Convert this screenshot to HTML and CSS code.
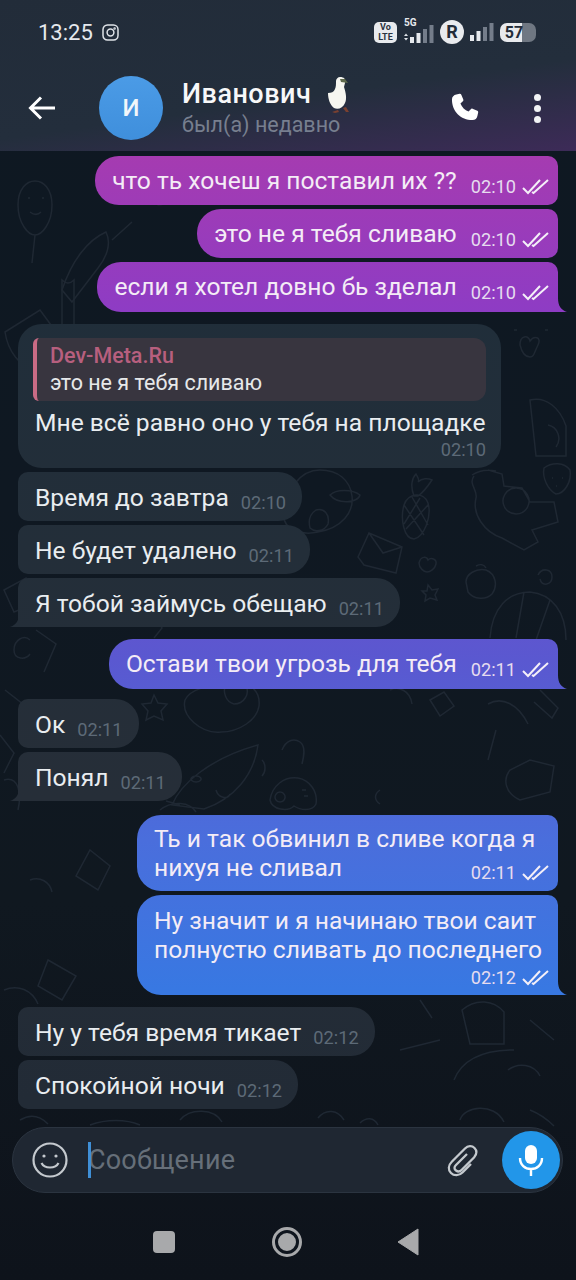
FILE: index.html
```html
<!DOCTYPE html>
<html lang="ru">
<head>
    <meta charset="UTF-8">
    <meta name="viewport" content="width=device-width, initial-scale=1.0">
    <title>Иванович</title>
    <link rel="stylesheet" href="styles.css">
</head>
<body>

<svg width="0" height="0" class="defs">
    <symbol id="checks" viewBox="0 0 27 18">
        <path d="M1 10l5 5L18 2M10 14l1.500 1L26 2" fill="none" stroke="currentColor" stroke-width="2"/>
    </symbol>
</svg>

<div class="phone">
    <header class="top">
        <div class="status">
            <span class="clock">13:25</span>
            <svg class="insta" width="17" height="17" viewBox="0 0 17 17" fill="none" stroke="#dfe3e8" stroke-width="1.500"><rect x="1" y="1" width="15" height="15" rx="4.500"/><circle cx="8.500" cy="8.500" r="3.400"/><circle cx="12.600" cy="4.400" r=".5"/></svg>
            <div class="status-right">
                <span class="volte">Vo<br>LTE</span>
                <span class="net"><b>5G</b>
                    <svg width="31" height="18" viewBox="0 0 31 18"><path d="M1 11l2-2.500 2 2.500zM1 13l2 2.500 2-2.500z" fill="#dfe3e8"/><path d="M7 12h4v6H7zM13.500 8h4v10h-4z" fill="#e6e9ed"/><path d="M20 4h4v14h-4zM26.500 0h4v18h-4z" fill="#747d8a"/></svg>
                </span>
                <span class="r-mark">R</span>
                <svg width="24" height="18" viewBox="0 0 24 18"><path d="M0 12h4v6H0zM6.500 8h4v10h-4z" fill="#e6e9ed"/><path d="M13 4h4v14h-4zM19.500 0h4v18h-4z" fill="#747d8a"/></svg>
                <span class="battery"><span class="level">57</span></span>
            </div>
        </div>
        <div class="toolbar">
            <svg class="back" width="28" height="26" viewBox="0 0 28 26" fill="none" stroke="#fff" stroke-width="3"><path d="M27 13H3M13 2.500L2.500 13 13 23.500"/></svg>
            <div class="avatar">И</div>
            <div class="who">
                <div class="name">Иванович
                    <svg class="goose" width="24" height="38" viewBox="0 0 24 38"><path d="M12 34l-6 2 3 1 4-1zM17 32l3 4h3l-3-5z" fill="#7a4030"/><path d="M14 1c4 0 6 2 5 6l-1 4c2 6 3 12 1 16-2 5-7 7-11 5-4-3-6-9-6-15 3 0 6-1 7-4 1-2 1-5 1-8 0-2 2-4 4-4z" fill="#f6f6f0"/><path d="M14 3h5l3 4-7-1z" fill="#5f6a4c"/></svg>
                </div>
                <div class="seen">был(а) недавно</div>
            </div>
            <svg class="call" width="34" height="34" viewBox="0 0 24 24" fill="#fff"><path d="M6.600 2.500l2.300-.5c.5-.1 1 .2 1.200.6l1.400 3.400c.2.400.1.900-.3 1.200L9.500 8.800c.9 2.500 3.200 4.800 5.700 5.700l1.600-1.700c.3-.4.800-.5 1.200-.3l3.400 1.400c.5.200.7.700.6 1.200l-.5 2.300c-.3 1.800-1.600 3.100-3.500 3.100C9.600 20.500 3.500 14.400 3.500 6c0-1.900 1.300-3.200 3.100-3.500z"/></svg>
            <div class="dots"><i></i><i></i><i></i></div>
        </div>
    </header>

    <main class="chat">
        <svg class="wallpaper" width="576" height="976" viewBox="0 151 576 976" fill="none" stroke="#1f2833" stroke-width="1.500">
            <!-- balloon, sketches on the left -->
            <path d="M18 205c0-32 34-32 34 0 0 18-10 30-17 30s-17-12-17-30zM35 235l-3 28M28 198h2M42 198h2M30 212c4 3 8 3 11 0"/>
            <path d="M62 290c10-30 26-50 44-58 6 12 0 26-8 36l-26 34zM100 290c10-6 24 0 26 14M112 240l20-18"/>
            <path d="M5 332l35-22 22 30-28 30c-14-4-26-18-29-38zM62 280c4 4 8 4 12 0v46c-4 4-8 4-12 0z"/>
            <path d="M150 190c6-8 18-2 16 8s-14 8-14 0M520 345c0-10 8-10 10-4 4-6 12-4 8 4s-4 12-8 12-8-4-10-12zM514 330h3M545 330h3"/>
            <path d="M530 400c16-4 30 8 36 26v30h-30zM548 425c10 2 14 14 8 22M4 590l22-12 8 26-20 8z"/>
            <!-- right column: pineapple, strawberry, cat, envelope -->
            <path d="M404 505c4-12 20-14 24-2 4 14-4 34-14 36-10 0-14-20-10-34zM404 505l20 30M412 497l16 28M428 505l-22 24M420 498l-16 26M414 496c-4-10-2-18 2-22 2 4 4 6 2 8 4-4 10-4 14-2-4 6-8 12-14 16z"/>
            <path d="M544 468c8-6 20-6 26 2 2 12-6 24-14 24-8-4-14-16-12-26zM552 478h1M562 478h1M556 486h1"/>
            <path d="M472 475c6-4 14-6 24-4M474 476c-6 8 4 14 2 22-4 16 8 34 26 40l22 12 14-8-6-12 26-8-4-20-24 0-8-14-18-2-2-12-14-4M516 488a13 13 0 1 0 .1 0"/>
            <path d="M358 557l11-24 33 14-6 26-32-8zM369 533l14 20 19-6M419 563c2-8 8-6 9-3 3-3 9-1 8 4s-6 8-9 8-8-4-8-9zM428 585l4 5 6-1-3 6 2 5-7-2-5 3 1-6-4-4h5z"/>
            <path d="M320 470c-20 0-34 20-36 44-2 14 16 22 34 18 24-4 36-20 34-36-2-16-14-26-32-26zM330 495c6-6 22-6 30 0-2 8-22 10-30 0zM316 510c8-2 14 4 12 14-4 8-14 8-18 4-2-8 0-14 6-18z"/>
            <path d="M466 582c0-8 10-14 20-12 10 4 12 16 6 24-6 6-18 6-24-2zM476 566c4-2 8-2 10 2M538 575c4-8 14-6 14 2s-10 10-12 2M490 638c2-30 18-46 40-46 22 2 36 20 36 48M524 592l-8 46M550 600l-14 40M294 600h16v22h-16z"/>
            <!-- middle: astronaut, star, rocket, controller -->
            <path d="M185 700c6-12 24-14 40-16 18-8 36 4 34 22-2 14-20 26-38 26-20 2-40-16-36-32zM226 684c-4 8 0 18 8 20 10 0 16-10 12-18M154 695l4 8 9 1-6 7 2 9-9-4-8 4 2-9-6-7 9-1z"/>
            <path d="M172 805c8-20 36-46 86-60-4 30-24 54-54 64zM196 776a5 3 0 1 0 .1 0M216 790c2 8 12 10 14 4M180 805l-14-4M262 760c4 4 4 12 0 16"/>
            <path d="M270 800c2-14 14-24 28-22 12 2 20 14 18 26-4 8-16 6-22 2-6 6-22 4-24-6zM280 792a5 5 0 1 0 .1 0M302 790h4M304 796h4M282 750c4-10 12-12 18-8s4 14 2 22"/>
            <path d="M30 640c-6-6-16 0-16 10s12 10 16 4M36 630l20 14-12 28M5 690l28 22-12 18M156 618l6 10-8 10"/>
            <path d="M0 735l14 18-10 20M4 780c14-4 18 12 14 30M50 730c8-6 18-4 24 2M160 810c12-10 30-8 36 2"/>
            <path d="M488 704c14-8 30 0 40 20M496 730l-8 30M540 690l18 18-6 10-18-16M510 770c-8 10-4 24 10 30l30-8 4-26-24-6z"/>
            <path d="M390 690c8-4 20 0 22 14M430 700l14-8 10 14-14 10zM380 790c-6 4-6 10 0 14M30 880c10-4 20 2 22 12M90 850l20 16-12 24-22-14z"/>
            <path d="M4 990c14-6 28 0 34 14M48 960l28 16-14 24-24-14zM462 1010c14-12 32-10 42 2v32h-34zM400 1050l40-10M508 1070c10-8 26-6 32 6M420 1000l12 18M454 1080c8-20 28-30 60-30M530 1020l24 20"/>
            <path d="M90 1125c16-6 36-6 50 0M20 1120c10-6 20-4 28 4M180 1120c10-12 34-12 42 2M318 1118c8-10 20-8 26 2M360 1123c6-6 14-6 18 2M460 1120c4-14 34-18 44 2M530 1110c10 4 18 10 24 16"/>
        </svg>

        <div class="bubble out">
            <span class="text">что ть хочеш я поставил их ??</span>
            <span class="meta">02:10 <svg class="tick"><use href="#checks"/></svg></span>
        </div>
        <div class="bubble out">
            <span class="text">это не я тебя сливаю</span>
            <span class="meta">02:10 <svg class="tick"><use href="#checks"/></svg></span>
        </div>
        <div class="bubble out tail">
            <span class="text">если я хотел довно бь зделал</span>
            <span class="meta">02:10 <svg class="tick"><use href="#checks"/></svg></span>
        </div>

        <div class="bubble in reply-bubble group-start">
            <div class="quote">
                <div class="quote-from">Dev-Meta.Ru</div>
                <div class="quote-text">это не я тебя сливаю</div>
            </div>
            <div class="text">Мне всё равно оно у тебя на площадке</div>
            <div class="meta meta-end">02:10</div>
        </div>
        <div class="bubble in">
            <span class="text">Время до завтра</span>
            <span class="meta">02:10</span>
        </div>
        <div class="bubble in">
            <span class="text">Не будет удалено</span>
            <span class="meta">02:11</span>
        </div>
        <div class="bubble in tail">
            <span class="text">Я тобой займусь обещаю</span>
            <span class="meta">02:11</span>
        </div>

        <div class="bubble out tail group-start">
            <span class="text">Остави твои угрозь для тебя</span>
            <span class="meta">02:11 <svg class="tick"><use href="#checks"/></svg></span>
        </div>

        <div class="bubble in gap-small">
            <span class="text">Ок</span>
            <span class="meta">02:11</span>
        </div>
        <div class="bubble in tail">
            <span class="text">Понял</span>
            <span class="meta">02:11</span>
        </div>

        <div class="bubble out multi gap-large">
            <div class="text">Ть и так обвинил в сливе когда я<br>нихуя не сливал</div>
            <div class="meta meta-over">02:11 <svg class="tick"><use href="#checks"/></svg></div>
        </div>
        <div class="bubble out multi last tail">
            <div class="text">Ну значит и я начинаю твои саит<br>полнустю сливать до последнего</div>
            <div class="meta meta-end">02:12 <svg class="tick"><use href="#checks"/></svg></div>
        </div>

        <div class="bubble in group-start">
            <span class="text">Ну у тебя время тикает</span>
            <span class="meta">02:12</span>
        </div>
        <div class="bubble in">
            <span class="text">Спокойной ночи</span>
            <span class="meta">02:12</span>
        </div>

        <div class="composer">
            <svg class="smile" width="36" height="36" viewBox="0 0 36 36" fill="none" stroke="#c4c9ce" stroke-width="2.200"><circle cx="18" cy="18" r="16.500"/><circle cx="12" cy="14" r="1.600" fill="#c4c9ce" stroke="none"/><circle cx="24" cy="14" r="1.600" fill="#c4c9ce" stroke="none"/><path d="M9.500 21c3 6 14 6 17 0"/></svg>
            <div class="field"><span class="caret"></span>Сообщение</div>
            <svg class="clip" width="34" height="36" viewBox="0 0 34 36" fill="none" stroke="#c4c9ce" stroke-width="2.300"><path d="M20 12L9 23c-2 2-2 4 0 5.500s3.500 1.500 5.500-.5L27 15.500c3-3.500 3-7 .5-9.500s-6.500-2.500-9.500.5L5 19.500c-4 4-4 8.500-1 11.500s8 3 11.500-.5L24 22"/></svg>
            <div class="mic">
                <svg width="30" height="34" viewBox="0 0 30 34" fill="none" stroke="#fff" stroke-width="2.400"><rect x="9" y="2" width="12" height="19" rx="6" fill="#fff" stroke="none"/><path d="M4 15c0 7 5 11 11 11s11-4 11-11M15 26v7"/></svg>
            </div>
        </div>
    </main>

    <nav class="navbar">
        <span class="nav-square"></span>
        <span class="nav-home"></span>
        <svg width="22" height="28" viewBox="0 0 22 28"><path d="M21 1v26L1 14z" fill="#a8a9ab" stroke="#a8a9ab" stroke-linejoin="round"/></svg>
    </nav>
</div>

</body>
</html>
```

FILE: styles.css
```css
html, body { margin: 0; padding: 0; background: #0f1620; }
body { font-family: Roboto, "Liberation Sans", sans-serif; color: #eef0f2; }
.defs { position: absolute; }
.phone { width: 576px; height: 1280px; display: flex; flex-direction: column; overflow: hidden; background: linear-gradient(180deg, #0e1822 0, #0f1822 500px, #101820 900px, #0e131b 1280px); }

/* header */
.top { height: 151px; flex: none; box-sizing: border-box; padding: 20px 0 0; background: linear-gradient(172deg, #222c39 0, #232e3c 60%, #3d2b58 100%); }
.status { display: flex; align-items: center; height: 24px; padding: 0 40px 0 38px; }
.clock { font-size: 22px; color: #e6e9ed; }
.insta { margin-left: 9px; }
.status-right { margin-left: auto; display: flex; align-items: center; gap: 6px; }
.volte { width: 23px; height: 21px; border-radius: 5px; background: #e8eaed; color: #2a3340; font-size: 9px; line-height: 10.5px; font-weight: 700; text-align: center; }
.net { position: relative; display: block; width: 31px; height: 22px; }
.net b { position: absolute; left: 1px; top: -4px; font-size: 10px; color: #e6e9ed; }
.net svg { position: absolute; left: 0; top: 4px; }
.r-mark { width: 24px; height: 24px; border-radius: 50%; background: #e9ebee; color: #232c38; font-size: 18px; font-weight: 700; line-height: 24px; text-align: center; }
.battery { width: 36px; height: 19px; border-radius: 7px; background: linear-gradient(90deg, #e8eaed 62%, #6f7782 62%); display: block; }
.level { display: block; width: 28px; text-align: center; font-size: 16px; line-height: 19px; font-weight: 700; color: #232c38; }
.toolbar { display: flex; align-items: center; height: 72px; margin-top: 28px; padding-left: 28px; }
.back { flex: none; }
.avatar { flex: none; width: 64px; height: 64px; margin-left: 43px; border-radius: 50%; background: linear-gradient(180deg, #4b9be6, #3f8fdc); color: #f2f6fa; font-size: 24px; font-weight: 500; line-height: 64px; text-align: center; }
.who { margin-left: 19px; width: 258px; }
.name { font-size: 27px; line-height: 30px; font-weight: 500; color: #f7f8f9; letter-spacing: .5px; position: relative; height: 30px; }
.goose { position: absolute; left: 144px; top: -3px; }
.seen { font-size: 21.5px; line-height: 26px; color: #777f8f; margin-top: 3px; }
.call { flex: none; margin-left: 7px; }
.dots { flex: none; margin-left: 53px; display: flex; flex-direction: column; gap: 4px; }
.dots i { display: block; width: 7px; height: 7px; border-radius: 50%; background: #f2f3f5; }

/* messages */
.chat { position: relative; flex: 1; display: flex; flex-direction: column; padding: 1px 18px 0; }
.wallpaper { position: absolute; left: 0; top: 0; }
.bubble { position: relative; display: flex; box-sizing: border-box; min-height: 49px; margin-top: 4px; border-radius: 24px; font-size: 24.6px; line-height: 29px; }
.group-start { margin-top: 12px; }
.gap-small { margin-top: 10px; }
.gap-large { margin-top: 14px; }
.text { white-space: nowrap; }
.meta { white-space: nowrap; font-size: 18.2px; line-height: 20px; display: flex; align-items: center; }

.out { align-self: flex-end; padding: 10px 9px 0 17px; background: linear-gradient(180deg, #a63bb0 150px, #8e3cc4 310px, #5a58d0 660px, #4a6edc 840px, #3878e2 990px) fixed; color: #f4ecf6; border-top-right-radius: 10px; border-bottom-right-radius: 10px; }
.out.tail { min-height: 50px; }
.out .meta { margin: 10px 0 0 14px; height: 22px; color: #e6dcef; gap: 6px; }
.tick { width: 27px; height: 18px; color: #f4eff8; }
.in { align-self: flex-start; padding: 11px 16px 0 17px; background: linear-gradient(180deg, #202e3a 300px, #262e38 800px, #222b36 1100px) fixed; color: #e9edf0; border-top-left-radius: 10px; border-bottom-left-radius: 10px; }
.in .meta { margin: 9px 0 0 12px; height: 22px; color: #5d6a77; }

.tail { border-bottom-right-radius: 0; }
.in.tail { border-bottom-right-radius: 24px; border-bottom-left-radius: 0; }
.tail::after { content: ""; position: absolute; bottom: 0; width: 9px; height: 14px; background: inherit; }
.out.tail::after { right: -9px; clip-path: path("M0 0C0 8 3 12 9 14H0Z"); }
.in.tail::after { left: -8px; clip-path: path("M9 0C9 8 6 12 0 14H9Z"); }

.reply-bubble { display: block; width: 483px; height: 144px; padding: 14px 15px 0 17px; border-radius: 24px; }
.quote { height: 63px; box-sizing: border-box; margin: 0 0 7px -2px; padding: 4px 0 0 13px; background: #38353f; border-left: 4px solid #c96b85; border-radius: 6px 12px 12px 6px; }
.quote-from { font-size: 21.5px; line-height: 27px; font-weight: 500; color: #b75f7e; }
.quote-text { font-size: 21.5px; line-height: 28px; color: #e6e8ea; }
.meta-end { justify-content: flex-end; }
.in .meta-end { margin: 2px 0 0; height: 22px; }

.multi { display: block; width: 421px; padding: 9px 9px 7px 17px; }
.multi.last { padding: 11px 9px 6px 17px; }
.out .meta-over { justify-content: flex-end; margin: -20px 0 0; }
.out .meta-end { margin: 3px 0 0; height: 22px; }

/* composer */
.composer { position: absolute; left: 12px; right: 13px; top: 976px; height: 66px; display: flex; align-items: center; box-sizing: border-box; padding-left: 19px; border-radius: 33px; background: #1f2732; border: 1px solid #2b3440; }
.field { position: relative; margin-left: 20px; flex: 1; font-size: 27px; color: #666f79; letter-spacing: .2px; }
.caret { position: absolute; left: 0; top: -2px; width: 3px; height: 36px; background: #3f8fd6; }
.clip { flex: none; margin-right: 21px; }
.mic { flex: none; width: 58px; height: 58px; margin-right: 2px; border-radius: 50%; background: #2296e9; display: flex; align-items: center; justify-content: center; }

/* android nav */
.navbar { flex: none; height: 76px; margin-top: -38px; display: flex; align-items: center; padding-left: 153px; }
.nav-square { width: 22px; height: 22px; border-radius: 4px; background: #a8a9ab; }
.nav-home { width: 18px; height: 18px; margin-left: 100px; border-radius: 50%; background: #a8a9ab; border: 3px solid #0f151e; outline: 3px solid #a8a9ab; }
.navbar svg { margin-left: 98px; }
```
